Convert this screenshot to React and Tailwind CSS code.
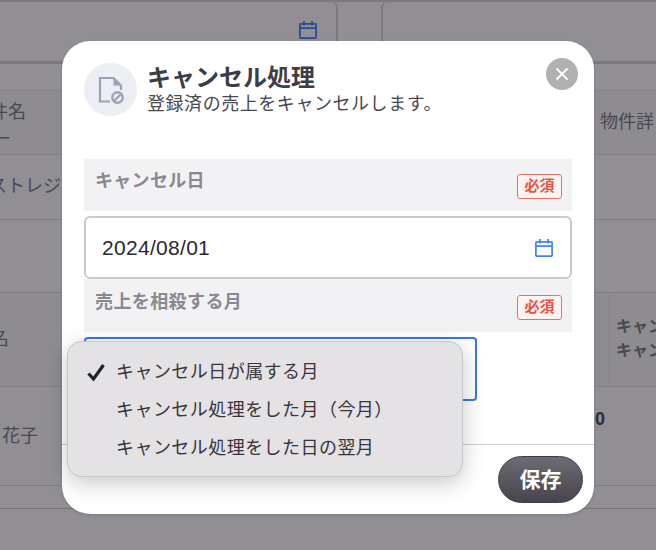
const font = { fontFamily: '"Liberation Sans","Noto Sans CJK JP",sans-serif' };

function CalendarIcon({ className }) {
  return (
    <svg viewBox="0 0 18 18" className={className} fill="none" stroke="currentColor" strokeWidth="1.7">
      <rect x="0.9" y="2.9" width="16.2" height="14.2" rx="0.8" />
      <path d="M1 7.2H17M5 0V4.4M13 0V4.4" />
    </svg>
  );
}

function FileBlockIcon() {
  return (
    <svg viewBox="0 0 26 28" className="h-7 w-[26px] text-[#9aa3b6]" fill="none" stroke="currentColor" strokeWidth="2.2">
      <path d="M12 25.5H2V2H15.5L23 9.5V14" />
      <path d="M15.5 1.5V9.5H23.5Z" fill="currentColor" stroke="none" />
      <circle cx="19.5" cy="21.5" r="5.2" strokeWidth="2.4" />
      <path d="M16.2 24.8L22.8 18.2" strokeWidth="2.2" />
    </svg>
  );
}

function Required() {
  return (
    <span className="flex h-[25px] w-[45px] items-center justify-center rounded-[3px] border border-[#ee6f62] bg-[#fdf4f2] text-[15px] font-bold text-[#e8503f]">
      必須
    </span>
  );
}

function Backdrop() {
  return (
    <div className="flex h-[550px] w-[656px] flex-col bg-[#918e94] text-[#4a4850]">
      <div className="flex h-[64px] border-t-2 border-b-[3px] border-[#7b787e]">
        <div className="flex h-full w-[338px] justify-end rounded-tr-md border-r-2 border-[#7b787e] pr-[19px] pt-[19px] text-[#274a94]">
          <CalendarIcon className="h-[18px] w-[18px]" />
        </div>
        <div className="ml-[43px] h-full flex-1 rounded-tl-md border-l-2 border-[#7b787e]" />
      </div>
      <div className="h-[27px] border-b border-[#85828a]" />
      <div className="flex h-[64px] justify-between border-b border-[#7f7c84] bg-[#8e8b91] text-[18px]">
        <div className="-ml-[10px] pt-[11px] leading-[20px]">
          <p>件名</p>
          <p className="pt-[7px] pl-[3px]">ー</p>
        </div>
        <div className="w-[56px] whitespace-nowrap pt-[20px] leading-[22px]">物件詳</div>
      </div>
      <div className="h-[65px] overflow-hidden whitespace-nowrap border-b border-[#7f7c84] pt-[20px] text-[18px] leading-[22px]">
        <span className="-ml-[11px] inline-block">ストレジ</span>
      </div>
      <div className="h-[73px] border-b border-[#7f7c84]" />
      <div className="flex h-[94px] justify-between border-b border-[#7f7c84] bg-[#8e8b91]">
        <div className="-ml-[9px] pt-[35px] text-[18px] leading-[22px]">名</div>
        <div className="w-[47px] overflow-hidden whitespace-nowrap border-l border-[#85828a] pl-[6px] pt-[22px] text-[16px] font-bold leading-[24px]">
          <p>キャンセル</p>
          <p>キャンセル</p>
        </div>
      </div>
      <div className="flex h-[99px] justify-between border-b border-[#7f7c84]">
        <div className="pl-[2px] pt-[38px] text-[18px] leading-[22px]">花子</div>
        <div className="w-[61px] pt-[21px] text-[18px] font-bold leading-[22px] text-[#2e2c33]">0</div>
      </div>
      <div className="h-[23px] border-b border-[#77747b]" />
    </div>
  );
}

function Dropdown() {
  const items = ["キャンセル日が属する月", "キャンセル処理をした月（今月）", "キャンセル処理をした日の翌月"];
  return (
    <div className="absolute left-[5px] top-[300px] flex h-[136px] w-[396px] flex-col rounded-[14px] border border-[#c6c5c7] bg-[#e4e2e4] pl-[18px] pt-[11px] text-[18px] tracking-[0.45px] text-[#37353b] shadow-[0_6px_22px_rgba(0,0,0,0.22)]">
      {items.map((item, i) => (
        <div key={item} className="flex h-[38px] items-center">
          <span className="flex w-[30px] shrink-0 items-center">
            {i === 0 && (
              <svg viewBox="0 0 20 20" className="h-5 w-5 text-[#232226]" fill="none" stroke="currentColor" strokeWidth="3.2">
                <path d="M2.5 11.5L7.5 17L17.5 3" />
              </svg>
            )}
          </span>
          <span>{item}</span>
        </div>
      ))}
    </div>
  );
}

function Modal() {
  return (
    <div className="absolute left-[62px] top-[41px] flex h-[473px] w-[532px] flex-col rounded-[28px] bg-white shadow-[0_1px_3px_rgba(0,0,0,0.15)]">
      <button className="absolute right-[16px] top-[17px] flex h-8 w-8 items-center justify-center rounded-full bg-[#b0afb2] text-white">
        <svg viewBox="0 0 14 14" className="h-[14px] w-[14px]" fill="none" stroke="currentColor" strokeWidth="1.8">
          <path d="M1.5 1.5L12.5 12.5M12.5 1.5L1.5 12.5" />
        </svg>
      </button>

      <div className="flex gap-[11px] px-[22px] pt-[22px]">
        <div className="flex h-[53px] w-[53px] shrink-0 items-center justify-center rounded-full bg-[#eceef3]">
          <FileBlockIcon />
        </div>
        <div className="-ml-[1px] pt-[1px]">
          <h2 className="text-[24px] font-bold leading-[28px] text-[#3e3c44]">キャンセル処理</h2>
          <p className="text-[18px] leading-[24px] tracking-[0.55px] text-[#4a4850]">登録済の売上をキャンセルします。</p>
        </div>
      </div>

      <div className="flex flex-col px-[22px] pt-[43px]">
        <div className="flex h-[52px] items-start justify-between bg-[#f2f2f4] pl-[11px] pr-[10px] pt-[10px]">
          <span className="text-[18px] font-bold leading-[24px] tracking-[0.3px] text-[#8a8890]">キャンセル日</span>
          <span className="pt-[5px]"><Required /></span>
        </div>
        <div className="mt-[5px] flex h-[63px] items-center justify-between rounded-[6px] border-2 border-[#c9c9c9] pl-[16px] pr-[17px] text-[21px] tracking-[0.3px] text-[#2a2830]">
          <span>2024/08/01</span>
          <CalendarIcon className="h-[18px] w-[18px] text-[#3b82f6]" />
        </div>
        <div className="flex h-[53px] items-start justify-between bg-[#f2f2f4] pl-[11px] pr-[10px] pt-[11px]">
          <span className="text-[18px] font-bold leading-[24px] tracking-[0.4px] text-[#8a8890]">売上を相殺する月</span>
          <span className="pt-[5px]"><Required /></span>
        </div>
        <div className="mt-[5px] h-[64px] w-[393px] rounded-[4px] border-2 border-[#3478f6]" />
      </div>

      <div className="mt-[43px] flex flex-1 items-start justify-end border-t border-[#cfcfcf] pr-[11px] pt-[11px]">
        <button className="flex h-[47px] w-[85px] items-center justify-center rounded-full border border-[#3f3d44] bg-gradient-to-b from-[#6e6c73] to-[#47454b] text-[21px] font-bold text-white">
          保存
        </button>
      </div>

      <Dropdown />
    </div>
  );
}

export default function App() {
  return (
    <div className="relative h-[550px] w-[656px] overflow-hidden" style={font}>
      <Backdrop />
      <Modal />
    </div>
  );
}
